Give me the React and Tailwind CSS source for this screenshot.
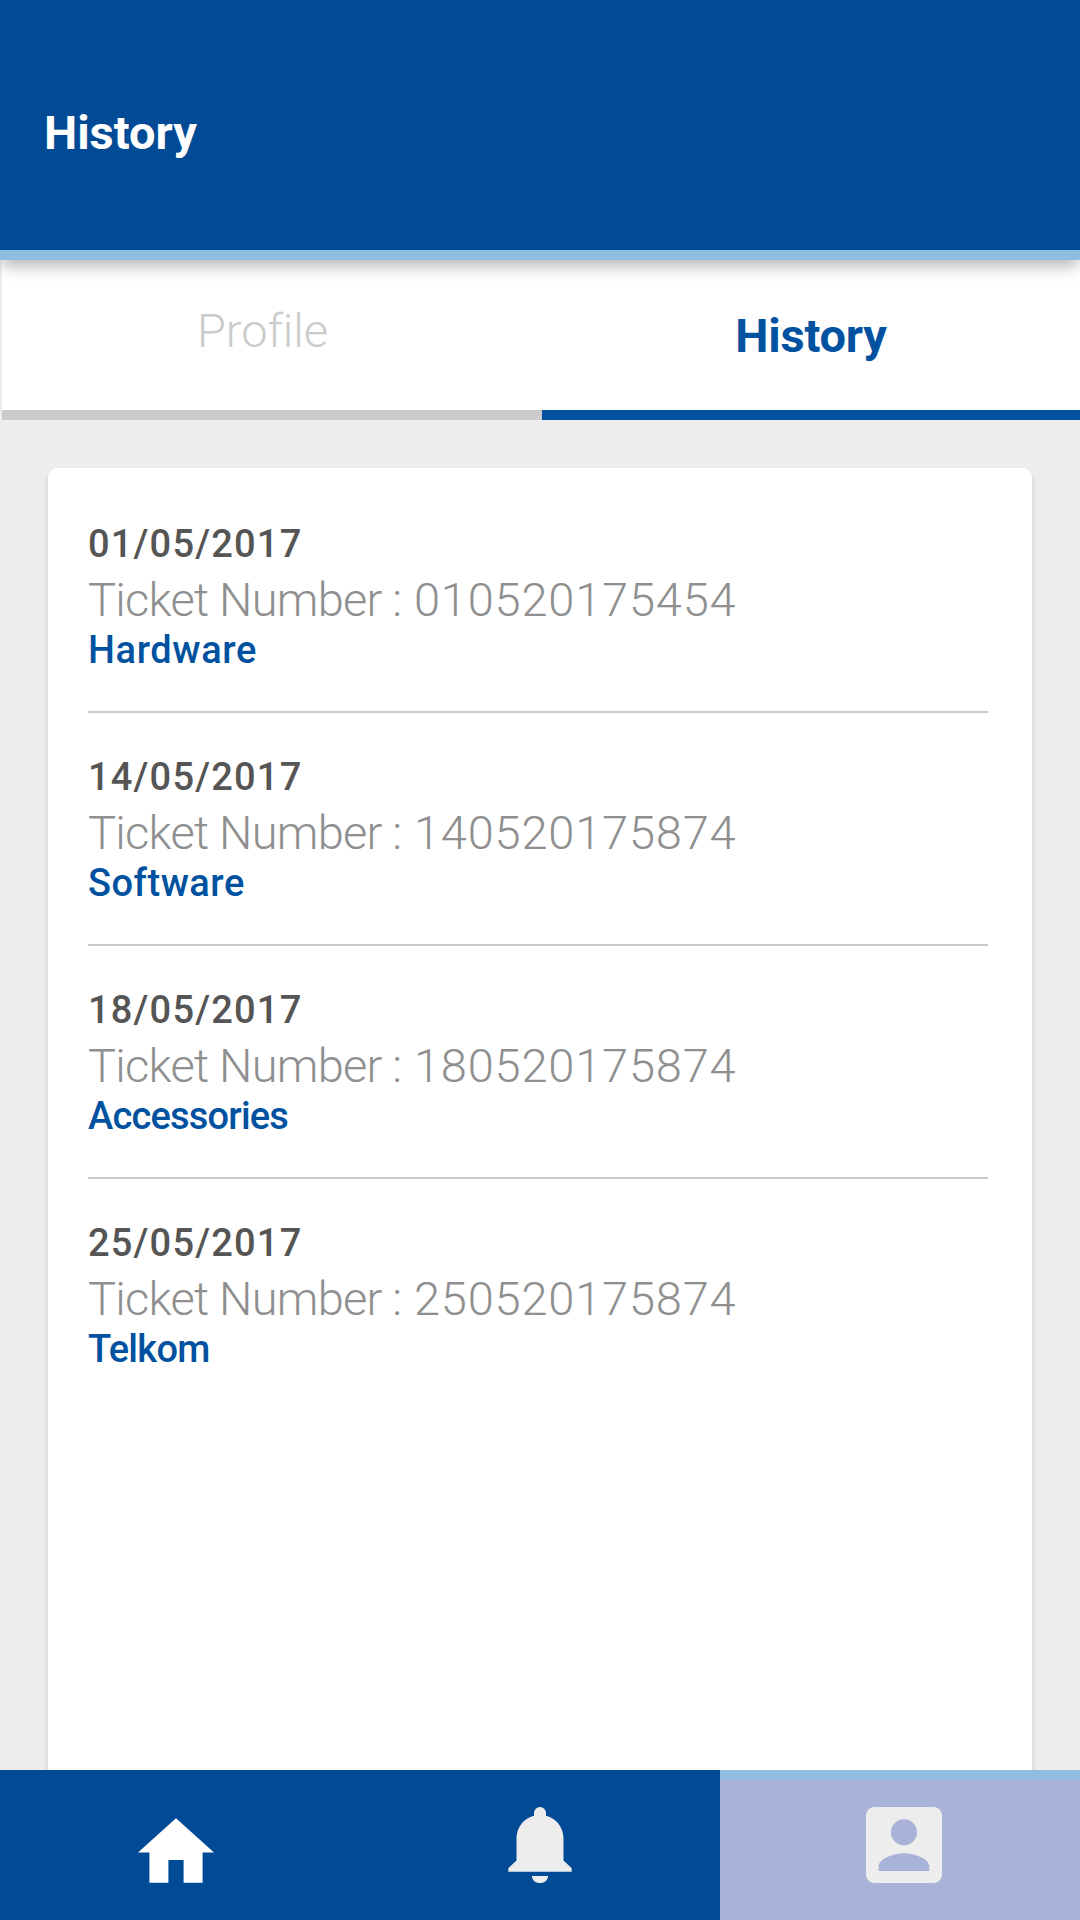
import React from "react";

const tickets = [
  { date: "01/05/2017", number: "010520175454", category: "Hardware", tracking: "tracking-[0.6px]" },
  { date: "14/05/2017", number: "140520175874", category: "Software", tracking: "tracking-[0.5px]" },
  { date: "18/05/2017", number: "180520175874", category: "Accessories", tracking: "tracking-[-0.8px]" },
  { date: "25/05/2017", number: "250520175874", category: "Telkom", tracking: "tracking-[-0.7px]" },
];

function HomeIcon() {
  return (
    <svg viewBox="2 3 20 17" className="mb-[37px] h-[65px] w-[76px] fill-white">
      <path d="M10 20v-6h4v6h5v-8h3L12 3 2 12h3v8z" />
    </svg>
  );
}

function BellIcon() {
  return (
    <svg viewBox="0 0 64 76" className="mb-[37px] h-[76px] w-[64px] fill-[#ededed]">
      <path d="M24 69h16c0 4-3.4 7-6.9 7h-2.2c-3.5 0-6.9-3-6.9-7zM55.5 53.4V31.5C55.5 20.2 48 11.2 38 8.7V6A6 6 0 0 0 26 6v2.7C16 11.2 8.5 20.2 8.5 31.5v21.9L0.3 61.2v3.6h63.4v-3.6z" />
    </svg>
  );
}

function AccountIcon() {
  return (
    <svg viewBox="3 3 18 18" className="mb-[37px] h-[76px] w-[76px] fill-[#ededed]">
      <path d="M3 5v14c0 1.1.89 2 2 2h14c1.1 0 2-.9 2-2V5c0-1.1-.9-2-2-2H5c-1.11 0-2 .9-2 2zm12.1 4c0 1.7-1.4 3.1-3.1 3.1s-3.1-1.4-3.1-3.1S10.3 5.9 12 5.9s3.1 1.4 3.1 3.1zm-9.1 8.100c0-2.030 4-3.130 6-3.130s6 1.100 6 3.130v1.030H6v-1.030z" />
    </svg>
  );
}

function Ticket({ date, number, category, tracking }) {
  return (
    <li className="flex h-[233px] flex-col border-b-2 border-[#c9c9c9] pt-[39px] last:border-transparent">
      <p className="h-[50px] text-[38px] leading-[50px] font-[550] tracking-[1.2px] whitespace-nowrap text-[#555555]">{date}</p>
      <p className="flex h-[61px] items-center text-[47px] leading-[60px] font-[350] whitespace-nowrap text-[#8f8f8f]">
        <span className="w-[326px] tracking-[-0.75px]">Ticket Number :</span>
        <span className="tracking-[0.8px]">{number}</span>
      </p>
      <p className={"h-[40px] text-[38px] leading-[40px] font-[550] whitespace-nowrap text-[#0052a0] " + tracking}>{category}</p>
    </li>
  );
}

export default function App() {
  return (
    <div className="flex h-[1920px] w-[1080px] flex-col overflow-hidden bg-[#ededed] font-['Roboto',sans-serif]">
      <header className="relative z-10 flex h-[260px] shrink-0 items-start border-b-10 border-[#8fbddf] bg-[#004a96] pt-[103px] pl-[44px] shadow-[0_9px_14px_-2px_rgba(0,0,0,0.27)]">
        <h1 className="text-[47px] leading-[60px] font-bold text-white">History</h1>
      </header>

      <nav className="flex h-[160px] shrink-0 pl-[2px] text-[47px] leading-[60px]">
        <button className="flex w-[540px] items-start justify-center border-b-10 border-[#cbcbcb] bg-white pt-[41px] pr-[19px] font-[350] tracking-[-0.1px] text-[#cbcbcb]">
          Profile
        </button>
        <button className="flex flex-1 items-start justify-center border-b-10 border-[#0052a0] bg-white pt-[46px] font-bold tracking-[-0.2px] text-[#0052a0]">
          History
        </button>
      </nav>

      <main className="flex min-h-0 flex-1 px-[48px] pt-[48px]">
        <ul className="h-[1400px] w-full rounded-[9px] bg-white pt-[12px] pr-[44px] pl-[40px] shadow-[0_3px_5px_rgba(0,0,0,0.14)]">
          {tickets.map((t) => (
            <Ticket key={t.date} {...t} />
          ))}
        </ul>
      </main>

      <footer className="z-10 grid h-[150px] shrink-0 grid-cols-3 bg-[#004a96]">
        <button aria-label="Home" className="flex items-end justify-center pr-[8px]">
          <HomeIcon />
        </button>
        <button aria-label="Notifications" className="flex items-end justify-center">
          <BellIcon />
        </button>
        <button aria-label="Account" className="flex items-end justify-center border-t-10 border-[#8fbddf] bg-[#a9b2d8] pl-[8px]">
          <AccountIcon />
        </button>
      </footer>
    </div>
  );
}
